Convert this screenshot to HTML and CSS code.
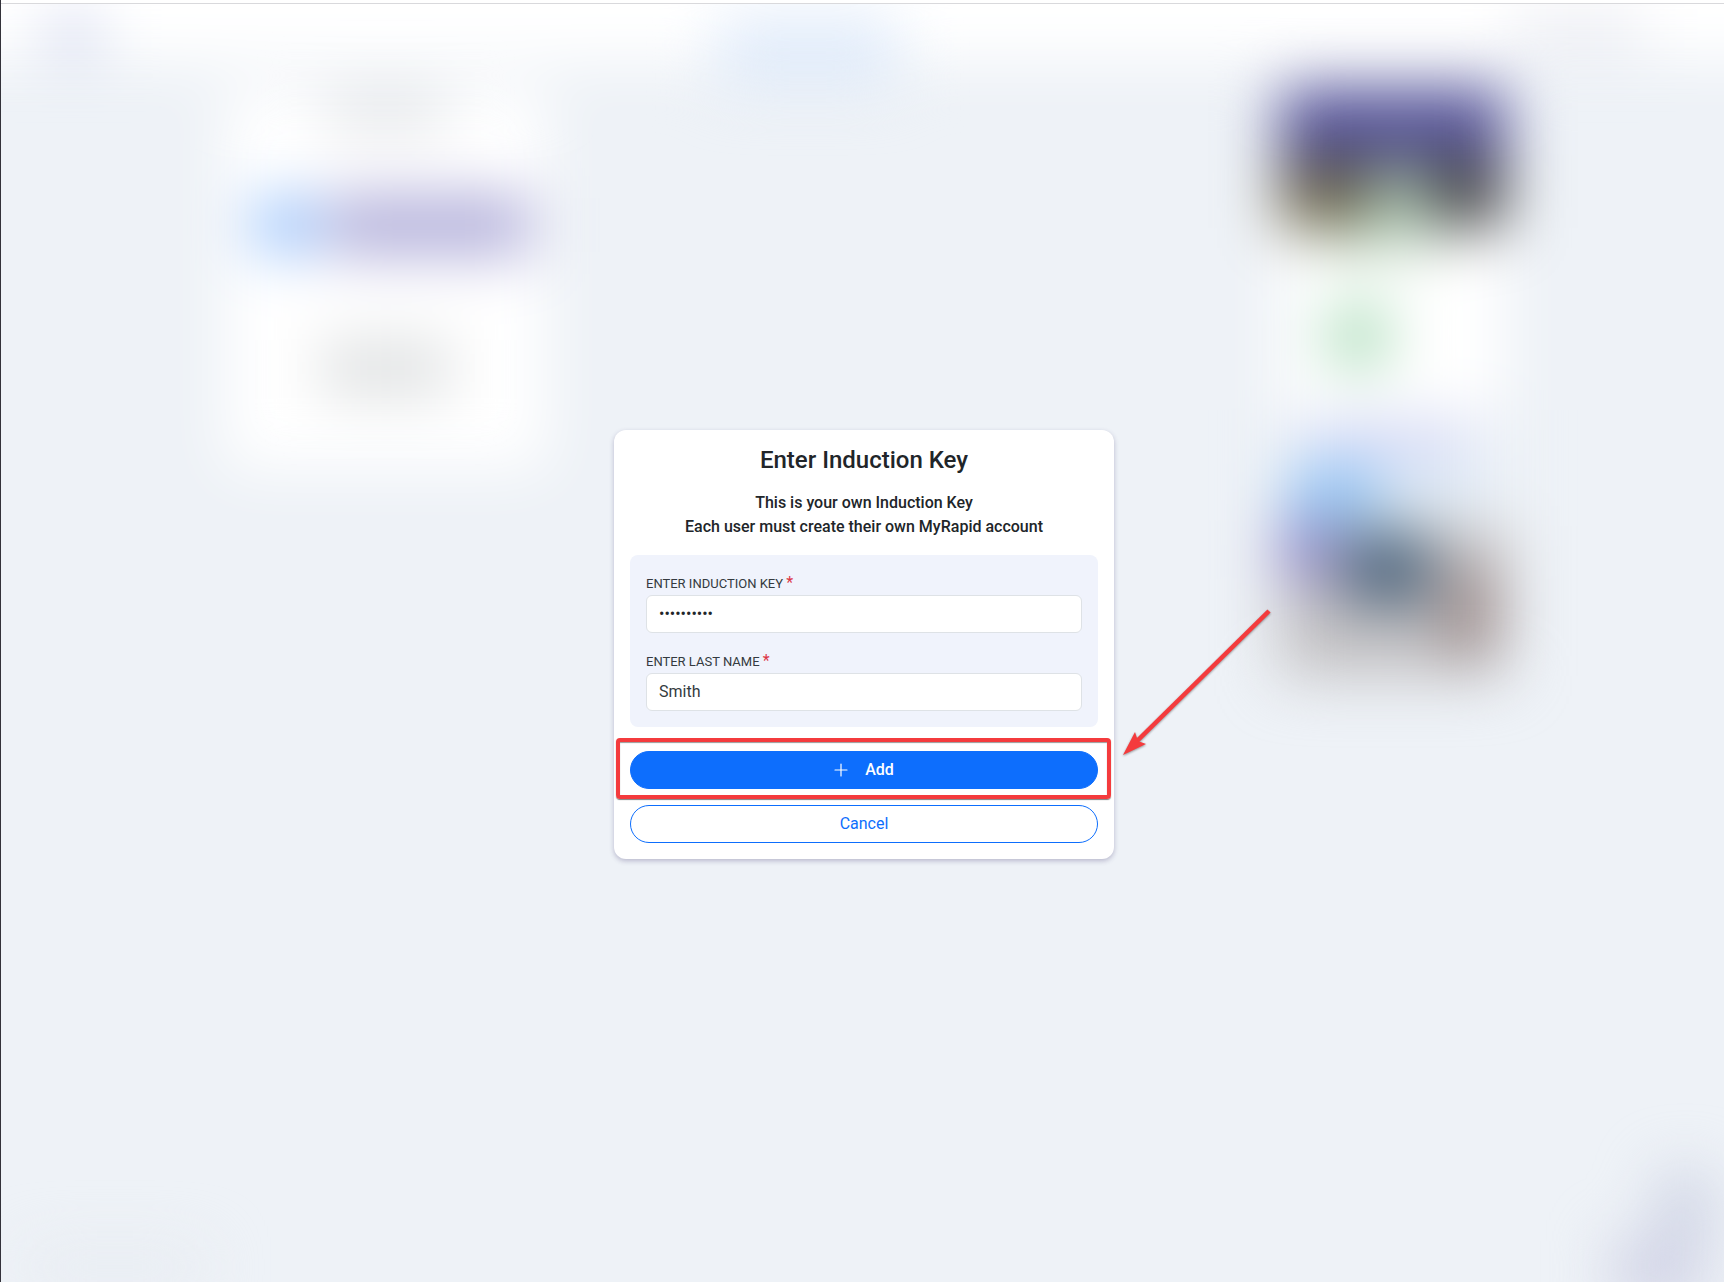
FILE: index.html
```
<!DOCTYPE html>
<html lang="en">
	<head>
		<meta charset="UTF-8">
		<meta name="viewport" content="width=device-width, initial-scale=1">
		<title>Enter Induction Key</title>
		<link rel="stylesheet" href="styles.css">
	</head>
	<body>
		<div class="page" aria-hidden="true">
			<header class="topbar">
				<div class="brand"></div>
				<div class="tabs"></div>
				<div class="user"></div>
			</header>
			<div class="columns">
				<div class="profile">
					<div class="profile-title"></div>
					<div class="profile-logo"><i></i><b></b></div>
					<div class="profile-text"></div>
				</div>
				<div class="news">
					<svg class="banner" viewBox="0 0 226 146" preserveAspectRatio="none">
						<rect width="226" height="146" fill="#48484a"/>
						<rect width="226" height="70" fill="#56539a"/>
						<rect y="88" width="80" height="58" fill="#6e654a"/>
						<rect x="88" y="82" width="62" height="64" fill="#a3bba8"/>
					</svg>
					<div class="notice"><b></b><i></i></div>
					<svg class="photo" viewBox="0 0 226 266" preserveAspectRatio="none">
						<rect width="226" height="266" fill="#eef2f7"/>
						<rect x="26" y="16" width="160" height="34" fill="#d3d6f6"/>
						<rect x="10" y="56" width="90" height="54" fill="#8fc5f5"/>
						<rect x="100" y="60" width="100" height="40" fill="#d9e8f5"/>
						<rect y="116" width="226" height="150" fill="#c2c0c2"/>
						<rect y="110" width="56" height="60" fill="#8f87c8"/>
						<rect x="66" y="124" width="84" height="70" fill="#48617a"/>
						<rect x="164" y="160" width="50" height="84" fill="#9c8a88"/>
					</svg>
				</div>
			</div>
			<footer class="bottombar">
				<div class="copyright"></div>
				<div class="chat"><i></i><b></b></div>
			</footer>
		</div>
		<div class="overlay">
			<form class="modal" onsubmit="return false">
				<h1>Enter Induction Key</h1>
				<p>This is your own Induction Key<br>Each user must create their own MyRapid account</p>
				<div class="fields">
					<div class="field">
						<label for="key">Enter Induction Key <span>*</span></label>
						<input id="key" type="password" value="induct1234">
					</div>
					<div class="field">
						<label for="lastName">Enter Last Name <span>*</span></label>
						<input id="lastName" type="text" value="Smith">
					</div>
				</div>
				<div class="highlight">
					<button class="btn add" type="submit">
						<svg width="14" height="14" viewBox="0 0 14 14"><path d="M7 1v12M1 7h12" stroke="currentColor" stroke-width="1.2" stroke-linecap="round"/></svg>
						Add
					</button>
					<svg class="arrow" width="160" height="160" viewBox="0 0 160 160">
						<path d="M151 7L19 137" stroke="#f43b3d" stroke-width="4.5"/>
						<path d="M5 151L17 128L20 137L28 140Z" fill="#f43b3d"/>
					</svg>
				</div>
				<button class="btn cancel" type="button">Cancel</button>
			</form>
		</div>
	</body>
</html>
```
FILE: styles.css
```
* {
	box-sizing: border-box;
}
body {
	margin: 0;
	min-height: 100vh;
	display: grid;
	border-left: 1px solid #33323a;
	background-color: #eef2f7;
	font-family: Roboto, sans-serif;
	font-size: 16px;
	line-height: 24px;
	color: #212529;
	overflow: hidden;
}
.page, .overlay {
	grid-area: 1 / 1;
}

/* page behind the dialog */
.page {
	display: flex;
	flex-direction: column;
	min-width: 0;
	filter: blur(30px);
}
.topbar {
	display: flex;
	justify-content: space-between;
	height: 60px;
	padding: 0 80px 0 44px;
	background-color: white;
	/* keeps the blur from fading out at the window edge */
	box-shadow: 0 -100px 0 100px white;
}
.brand {
	width: 56px;
	height: 40px;
	margin-top: 14px;
	background-color: #d3d8ee;
}
.tabs {
	width: 180px;
	height: 68px;
	margin-top: 16px;
	background-color: #e0ebfa;
}
.user {
	width: 130px;
	height: 44px;
	margin-top: 8px;
	background-color: #ecedf3;
}
.columns {
	flex: 1;
	display: flex;
	justify-content: space-between;
	align-items: flex-start;
	padding: 28px 218px 0 224px;
}
.profile {
	width: 322px;
	height: 382px;
	padding-top: 8px;
	background-color: white;
}
.profile-title {
	width: 120px;
	height: 34px;
	margin: 0 auto;
	background-color: #dfe1e4;
}
.profile-logo {
	display: flex;
	gap: 8px;
	height: 58px;
	margin: 66px 16px 84px 26px;
}
.profile-logo i {
	width: 68px;
	border-radius: 32px;
	background-color: #94c0fc;
}
.profile-logo b {
	flex: 1;
	background-color: #aeabd8;
}
.profile-text {
	width: 130px;
	height: 60px;
	margin: 0 auto;
	background-color: #e0e2e3;
}
.news {
	width: 226px;
}
.banner {
	display: block;
	width: 100%;
	height: 140px;
}
.notice {
	height: 182px;
	background-color: white;
}
.notice b {
	display: block;
	width: 120px;
	height: 30px;
	margin: 0 0 44px 40px;
	background-color: #d5ead6;
}
.notice i {
	display: block;
	width: 68px;
	height: 68px;
	margin-left: 44px;
	border-radius: 50%;
	background-color: #abdcb9;
}
.photo {
	display: block;
	width: 100%;
	height: 266px;
}
.bottombar {
	display: flex;
	justify-content: space-between;
	align-items: flex-end;
}
.copyright {
	width: 180px;
	height: 30px;
	margin-left: 24px;
	background-color: #e6eaf0;
}
.chat {
	display: flex;
	flex-direction: column;
	align-items: flex-end;
	padding-right: 12px;
}
.chat i {
	width: 54px;
	height: 70px;
	border-radius: 25px;
	background-color: #cbd0e2;
}
.chat b {
	width: 92px;
	height: 42px;
	margin-right: 8px;
	background-color: #d0d2e5;
	box-shadow: 0 20px #d0d2e5;
}

/* dialog */
.overlay {
	position: relative;
	display: flex;
	justify-content: center;
	align-items: center;
	border-top: 3px solid white;
	padding: 4px 0 0 3px;
	box-shadow: inset 0 1px #d9d9dc;
}
.modal {
	width: 500px;
	padding: 16px;
	border-radius: 12px;
	background-color: white;
	box-shadow: 0 2px 5px rgba(60, 50, 110, 0.3);
	text-align: center;
}
h1 {
	margin: 0 0 16px;
	font-size: 24px;
	line-height: 29px;
	font-weight: 500;
}
p {
	margin: 0 0 16px;
	font-weight: 500;
}
.fields {
	display: flex;
	flex-direction: column;
	gap: 16px;
	margin-bottom: 24px;
	padding: 16px;
	border-radius: 8px;
	background-color: #f0f3fc;
	text-align: left;
}
.field label {
	display: block;
	height: 24px;
	font-size: 13px;
	line-height: 26px;
	text-transform: uppercase;
	color: #343a40;
}
.field label span {
	font-size: 16px;
	line-height: 16px;
	color: #dc3545;
}
.field input {
	display: block;
	width: 100%;
	height: 38px;
	padding: 0 12px 2px;
	border: 1px solid #dee2e6;
	border-radius: 6px;
	background-color: white;
	font: inherit;
	color: #343a40;
}
#key {
	color: #212529;
}
.btn {
	display: flex;
	justify-content: center;
	align-items: center;
	width: 100%;
	height: 38px;
	padding: 0 12px;
	border: 1px solid #0d6efd;
	border-radius: 19px;
	font: inherit;
	cursor: pointer;
}
.add {
	gap: 17px;
	background-color: #0d6efd;
	color: white;
	font-weight: 500;
}
.cancel {
	background-color: white;
	color: #0d6efd;
}

/* marker around the Add button */
.highlight {
	position: relative;
	margin-bottom: 16px;
}
.highlight::after {
	content: "";
	position: absolute;
	inset: -13px -13px -10px -14px;
	border: 4px solid #f43b3d;
	border-radius: 4px;
	box-shadow: 0 1px 1px rgba(0, 0, 0, 0.5), inset 0 1px 1px rgba(0, 0, 0, 0.4);
	pointer-events: none;
}
.arrow {
	position: absolute;
	left: calc(100% + 20px);
	bottom: 25px;
	filter: drop-shadow(0 1px 1px rgba(0, 0, 0, 0.4));
}
```
